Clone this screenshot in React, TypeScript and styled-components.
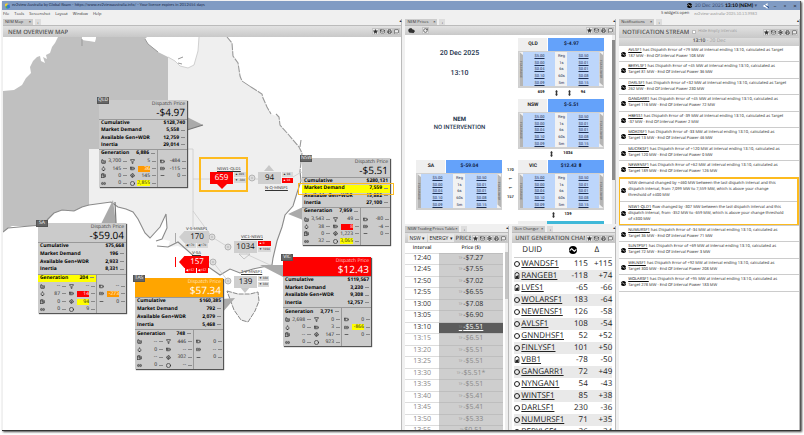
import React from "react";
import styled, { createGlobalStyle, css } from "styled-components";
import {
  Star, Mail, Printer, MessageSquare, Settings, RotateCw, Cloud, Factory, Droplet, Fuel, Link2,
  Filter, BatteryMedium, Fan, Circle, BatteryCharging, BatteryLow, Minus,
} from "lucide-react";

const ui = '"Open Sans", "Noto Sans", sans-serif';

const GlobalStyle = createGlobalStyle`
  * { box-sizing: border-box; }
  body { margin: 0; background: #fff; font-family: ${ui}; font-size: 5px; line-height: 1.2; color: #222; text-rendering: geometricPrecision; }
  button, select, input { font: inherit; color: inherit; margin: 0; padding: 0; border: 0; background: none; }
  ul { list-style: none; margin: 0; padding: 0; }
  a { color: inherit; }
  h1, h2, p { margin: 0; }
  svg { display: block; flex: none; }
`;

const Page = styled.div`
  height: 100vh;
  min-height: 400px;
  padding: 1px 3px 4px 2px;
  background: #fff;
  overflow: hidden;
`;
const Window = styled.div`
  height: 100%;
  display: flex;
  flex-direction: column;
  background: #f0f0f0;
  border-bottom: 1px solid #333;
  border-right: 1px solid #555;
  box-shadow: 1px 1px 2px #444;
`;
const TitleBar = styled.header`
  height: 9px;
  flex: none;
  display: flex;
  align-items: center;
  gap: 2px;
  padding: 0 1px 0 3px;
  background: #809bc3;
  color: #1c2c4c;
  font-family: Lato, sans-serif;
  font-size: 4px;
  white-space: nowrap;
`;
const Spacer = styled.span`flex: 1;`;
const Clock = styled.span`
  display: flex;
  align-items: center;
  gap: 3px;
  margin-right: 4px;
  font-size: 5px;
  color: #3a4c70;
  b { color: #000; }
`;
const WinButton = styled.button`
  width: 8px;
  height: 8px;
  font-size: 6px;
  line-height: 7px;
  color: #111;
`;
const MenuBar = styled.nav`
  height: 9px;
  flex: none;
  display: flex;
  align-items: center;
  gap: 5px;
  padding: 0 43px 0 1px;
  font-size: 4px;
  white-space: nowrap;
  color: #333;
`;
const Faint = styled.span`
  font-family: Lato, sans-serif;
  color: #999;
`;

const Columns = styled.main`
  flex: 1;
  min-height: 0;
  display: grid;
  grid-template-columns: 400fr 211fr 181fr;
  gap: 3px;
  padding: 0 0 0 1px;
`;
const Stack = styled.div`
  display: grid;
  grid-template-rows: 205px minmax(0, 1fr);
  gap: 2px;
  min-height: 0;
  min-width: 0;
`;
const Split = styled.div`
  display: grid;
  grid-template-columns: minmax(0, 1fr) minmax(0, 1fr);
  gap: 3px;
  min-height: 0;
`;
const Panel = styled.section`
  display: flex;
  flex-direction: column;
  min-width: 0;
  min-height: 0;
  border-right: 1px solid #bbb;
`;
const TabRow = styled.div`
  height: 6px;
  flex: none;
  display: flex;
  gap: 2px;
  font-size: 4px;
  line-height: 6px;
  white-space: nowrap;
`;
const TabLabel = styled.button<{ $w: number }>`
  width: ${(p) => p.$w}px;
  display: flex;
  justify-content: space-between;
  padding: 0 2px;
  background: #ccc;
  line-height: 6px;
  color: #333;
`;
const AddTab = styled.button`
  width: 6px;
  background: #ddd;
  text-align: center;
  line-height: 5px;
`;
const Bar = styled.div<{ $h: number; $tight?: boolean }>`
  height: ${(p) => p.$h}px;
  flex: none;
  display: flex;
  align-items: center;
  gap: ${(p) => (p.$tight ? 1 : 3)}px;
  padding: 0 1px 0 ${(p) => (p.$tight ? 3 : 5)}px;
  overflow: hidden;
  background: linear-gradient(#e2e2e2, #c8c8c8);
  border-top: 1px solid #bbb;
  white-space: nowrap;
`;
const Heading = styled.h2`
  font-size: 6px;
  line-height: 10px;
  font-weight: 600;
  color: #555;
  flex: 0 1 auto;
  min-width: 0;
  overflow: hidden;
`;
const ToolSet = styled.div`
  margin-left: auto;
  display: flex;
  flex: none;
`;
const Tool = styled.button`
  width: 7px;
  height: 7px;
  display: grid;
  place-items: center;
  background: #ececec;
  border: 1px solid #c4c4c4;
  color: #333;
`;
const RefreshTool = styled(Tool)`margin-left: 6px;`;
const Body = styled.div`
  position: relative;
  flex: 1;
  min-height: 0;
  overflow: hidden;
  background: #fff;
`;

function Tools({ gear }: { gear?: boolean }) {
  return (
    <ToolSet>
      <Tool aria-label="Favourite"><Star size={5} fill="#333" /></Tool>
      <Tool aria-label="Mail"><Mail size={5} strokeWidth={3} /></Tool>
      {gear && <Tool aria-label="Settings"><Settings size={5} strokeWidth={4} /></Tool>}
      <Tool aria-label="Print"><Printer size={5} strokeWidth={3} /></Tool>
      <Tool aria-label="Comment"><MessageSquare size={5} strokeWidth={3} /></Tool>
    </ToolSet>
  );
}
function Tabs({ name, w }: { name: string; w: number }) {
  return (
    <TabRow>
      <TabLabel $w={w}><span>{name}</span><b>×</b></TabLabel>
      <AddTab aria-label="Add tab">+</AddTab>
      <Spacer />
      <span>▴</span>
    </TabRow>
  );
}

/* ---------- map ---------- */
const MapSvg = styled.svg`
  position: absolute;
  left: 0;
  top: 0;
`;
type Tone = "gray" | "red" | "orange";
const tones: Record<Tone, string> = { gray: "#cbcbcb", red: "#fe0000", orange: "#ffa500" };

const Card = styled.article<{ $x: number; $y: number; $h: number }>`
  position: absolute;
  left: ${(p) => p.$x}px;
  top: ${(p) => p.$y}px;
  width: 88px;
  height: ${(p) => p.$h}px;
  display: flex;
  flex-direction: column;
  background: #cbcbcb;
  box-shadow: 1px 1px 1px #555;
  color: #000;
  white-space: nowrap;
`;
const RegionTag = styled.span`
  position: absolute;
  left: -2px;
  top: -3px;
  width: 12px;
  height: 7px;
  background: #666;
  border: 1px solid #555;
  color: #fff;
  font-size: 5px;
  line-height: 5px;
  text-align: center;
`;
const CardHead = styled.header<{ $tone: Tone }>`
  height: 20px;
  padding: 1px 2px 0;
  text-align: right;
  background: ${(p) => tones[p.$tone]};
  color: ${(p) => (p.$tone === "gray" ? "#000" : "#fff")};
  border-bottom: 1px solid #999;
  small { display: block; font-size: 5px; line-height: 6px; opacity: 0.7; }
  strong { display: block; font-size: 10px; line-height: 11px; font-weight: 400; }
`;
const Line = styled.div<{ $hot?: boolean }>`
  flex: 1;
  min-height: 0;
  display: flex;
  align-items: center;
  justify-content: space-between;
  padding: 0 2px;
  font-size: 5px;
  line-height: 7px;
  font-weight: 700;
  background: ${(p) => (p.$hot ? "#ffff00" : "transparent")};
`;
const Dash = styled.i`
  display: inline-block;
  flex: none;
  width: 4px;
  height: 1px;
  margin-left: 2px;
  vertical-align: middle;
  background: #888;
`;
const FuelArea = styled.div`
  flex: 5;
  display: grid;
  grid-template-columns: 59px 29px;
  border-top: 1px solid #999;
`;
const FuelLeft = styled.div`
  display: flex;
  flex-direction: column;
  border-right: 1px solid #999;
`;
const FuelGrid = styled.div<{ $cols: number }>`
  flex: 4;
  display: grid;
  grid-template-columns: repeat(${(p) => p.$cols}, minmax(0, 1fr));
  grid-template-rows: repeat(4, minmax(0, 1fr));
`;
const FuelRight = styled.div`
  display: flex;
  flex-direction: column;
`;
const Blank = styled.div`flex: 1;`;
const FuelCell = styled.div`
  display: flex;
  align-items: center;
  padding: 0 1px 0 2px;
  font-size: 5px;
  line-height: 6px;
  color: #222;
`;
const FuelValue = styled.span<{ $c?: string }>`
  margin-left: auto;
  min-width: 12px;
  text-align: right;
  ${(p) => p.$c && css`background: ${p.$c};`}
  ${(p) => p.$c && p.$c !== "#ffff00" && css`color: #fff;`}
`;
const fuelIcons = [Factory, Filter, Droplet, BatteryMedium, Fuel, Fan, Link2, Circle];
const sideIcons = [BatteryLow, BatteryCharging, Minus];
type Fv = string | [string, string];

interface Region {
  code: string; x: number; y: number; h: number; tone: Tone; price: string; sums: string[];
  gen: string; hotSum?: number; hotGen?: boolean; fuels: Fv[]; side: Fv[];
}
const R = "#fe0000", O = "#ff9900", Y = "#ffff00";
const regions: Region[] = [
  { code: "QLD", x: 96, y: 63, h: 87, tone: "gray", price: "-$4.97", sums: ["$128,740", "5,558", "12,759", "29,014"], gen: "6,886",
    fuels: ["3,700", "5", "145", ["36", O], "0", "145", "0", ["2,855", Y]], side: ["-484", "-115", "0"] },
  { code: "SA", x: 35, y: 186, h: 90, tone: "gray", price: "-$59.04", sums: ["$75,668", "196", "2,933", "8,331"], gen: "204", hotGen: true,
    fuels: ["--", "--", "87", ["14", R], "0", ["94", Y], "0", "9"], side: ["--", ["-273", O], "0"] },
  { code: "NSW", x: 299, y: 121, h: 87, tone: "gray", price: "-$5.51", sums: ["$280,131", "7,559", "15,882", "27,100"], gen: "7,959", hotSum: 1,
    fuels: ["3,543", "49", "38", ["8", R], "0", "1,223", "32", ["3,065", Y]], side: ["-80", "-4", "0"] },
  { code: "TAS", x: 132, y: 241, h: 91, tone: "orange", price: "$57.34", sums: ["$160,385", "792", "2,079", "5,468"], gen: "748",
    fuels: ["--", "446", "0", "--", "--", "302", "0", "--"], side: ["0", "--", "0"] },
  { code: "VIC", x: 280, y: 220, h: 89, tone: "red", price: "$12.43", sums: ["$119,567", "3,230", "9,308", "12,757"], gen: "3,771",
    fuels: ["2,698", "0", "0", "3", "--", "147", "0", "923"], side: ["0", ["-866", Y], "0"] },
];
const sumLabels = ["Cumulative", "Market Demand", "Available Gen+WDR", "Inertia"];

function Fuels({ items, icons }: { items: Fv[]; icons: typeof fuelIcons }) {
  return (
    <>
      {items.map((f, i) => {
        const Icon = icons[i];
        const [v, c] = Array.isArray(f) ? f : [f, undefined];
        return (
          <FuelCell key={i}>
            <Icon size={5} strokeWidth={3} />
            <FuelValue $c={c}>{v}</FuelValue>
            <Dash />
          </FuelCell>
        );
      })}
    </>
  );
}
function RegionCard({ r }: { r: Region }) {
  return (
    <Card $x={r.x} $y={r.y} $h={r.h}>
      <CardHead $tone={r.tone}>
        <small>Dispatch Price</small>
        <strong>{r.price}</strong>
      </CardHead>
      <RegionTag>{r.code}</RegionTag>
      {sumLabels.map((l, i) => (
        <Line key={l} $hot={r.hotSum === i}>
          <span>{l}</span>
          <span>{r.sums[i]}{i > 0 && <Dash />}</span>
        </Line>
      ))}
      <FuelArea>
        <FuelLeft>
          <Line $hot={r.hotGen}><span>Generation</span><span>{r.gen}<Dash /></span></Line>
          <FuelGrid $cols={2}><Fuels items={r.fuels} icons={fuelIcons} /></FuelGrid>
        </FuelLeft>
        <FuelRight>
          <Blank />
          <FuelGrid $cols={1}><Fuels items={r.side} icons={sideIcons} /></FuelGrid>
        </FuelRight>
      </FuelArea>
    </Card>
  );
}

const Frame = styled.div<{ $x: number; $y: number; $w: number; $h: number }>`
  position: absolute;
  left: ${(p) => p.$x}px;
  top: ${(p) => p.$y}px;
  width: ${(p) => p.$w}px;
  height: ${(p) => p.$h}px;
  border: 2px solid #fdbb1f;
`;
const ThinFrame = styled(Frame)`border-width: 1px;`;
const Flow = styled.div<{ $x: number; $y: number }>`
  position: absolute;
  left: ${(p) => p.$x}px;
  top: ${(p) => p.$y}px;
  display: grid;
  grid-template-columns: auto auto;
  column-gap: 1px;
  width: max-content;
`;
const FlowBox = styled.span<{ $red?: boolean; $left?: boolean }>`
  width: ${(p) => (p.$left ? 30 : 23)}px;
  height: 12px;
  padding-left: ${(p) => (p.$left ? 6 : 0)}px;
  clip-path: ${(p) => (p.$left ? "polygon(0 50%, 18% 0, 100% 0, 100% 100%, 18% 100%)" : "none")};
  background: ${(p) => (p.$red ? "#fe0000" : "#cfcfcf")};
  color: ${(p) => (p.$red ? "#fff" : "#111")};
  font-size: 8px;
  line-height: 12px;
  text-align: center;
`;
const Limits = styled.span<{ $under?: boolean }>`
  display: flex;
  flex-direction: ${(p) => (p.$under ? "row" : "column")};
  gap: 1px;
  ${(p) => p.$under && css`grid-column: 1; padding: 0 0 0 6px;`}
`;
const Limit = styled.small<{ $red?: boolean }>`
  padding: 0 1px;
  min-width: 11px;
  height: 5px;
  background: ${(p) => (p.$red ? "#fe0000" : "#d8d8d8")};
  color: ${(p) => (p.$red ? "#fff" : "#222")};
  font-size: 3px;
  line-height: 5px;
  white-space: nowrap;
`;
const FlowName = styled.span<{ $x: number; $y: number }>`
  position: absolute;
  left: ${(p) => p.$x}px;
  top: ${(p) => p.$y}px;
  font-size: 4px;
  line-height: 5px;
  font-family: Lato, sans-serif;
  color: #333;
  text-decoration: underline;
`;

interface FlowData { name: string; nx: number; ny: number; x: number; y: number; v: string; red?: boolean; left?: boolean; lim: [string, boolean][]; }
const flows: FlowData[] = [
  { name: "NSW1-QLD1", nx: 214, ny: 129, x: 207, y: 135, v: "659", red: true, lim: [["▲ 493", false], ["▼ -388", false]] },
  { name: "N-Q-MNSP1", nx: 262, ny: 148, x: 255, y: 135, v: "94", lim: [["▲ 94", false], ["▲ 94", true]] },
  { name: "V-S-MNSP1", nx: 183, ny: 189, x: 176, y: 194, v: "170", left: true, lim: [["◀ 170", false], ["◀ 170", false]] },
  { name: "V-SA", nx: 189, ny: 213, x: 176, y: 219, v: "157", red: true, left: true, lim: [["◀ 157", true], ["◀ 157", true]] },
  { name: "VIC1-NSW1", nx: 238, ny: 197, x: 231, y: 204, v: "1034", lim: [["▲ 0", true], ["▼ 1034", false]] },
  { name: "T-V-MNSP1", nx: 238, ny: 232, x: 231, y: 239, v: "139", lim: [["▼ 338", false], ["▼ 339", false]] },
];

function OverviewMap() {
  return (
    <Body>
      <MapSvg width="400" height="395" viewBox="3 36 400 395" aria-hidden="true">
        <path d="M58 36 L55 42 52 46 50 52 46 54 47 58 43 56 45 62 41 60 40 55 37 56 33 60 30 66 31 72 26 77 22 84 14 89 3 90 V231 L8 227 12 225 30 225 42 224 48 219 54 212 62 209 74 210 82 206 89 204 V148 H168 V56 L158 51 148 43 145 38 147 36 H96 L95 40 82 39 V36Z" fill="#c0c0c0" />
        <path d="M82 36 H96 L95 41 83 39Z" fill="#fff" />
        <path d="M89 148 H168 V56 L175 60 180 65 188 67 194 64 198 50 199 36 H227 L232 42 233 55 238 62 240 75 242 80 251 86 262 93 267 106 271 113 279 116 280 124 288 133 299 146 302 152 300 170 301 180 297 192 293 205 285 214 282 226 277 240 273 257 272 264 253 268 240 272 230 268 220 274 210 267 198 259 187 249 178 245 168 246 170 240 162 238 167 227 165 214 160 226 150 237 145 232 138 218 133 211 126 208 118 206 111 201 89 204Z" fill="#efefef" />
        <path d="M3 231 L8 227 30 225 42 224 M47 219 L54 212 62 209 74 210 82 206 89 204 111 201 118 206 126 208 133 211 138 218 145 232 150 237 160 226 166 213 167 227 162 238 156 240 M157 245 L168 246 178 241 187 249 198 259 210 267 220 274 230 268 240 272 253 268 272 264 273 257 277 240 282 226 285 214 293 205 297 192 301 180 300 170" fill="none" stroke="#8a8a8a" strokeWidth="1.1" />
        <path d="M227 36 L232 42 233 55 238 62 240 75 242 80 M251 86 L262 93 263 97 267 106 271 113 M276 113 L279 116 280 124 288 133 299 146 302 152 300 170 M301 139 L300 146" fill="none" stroke="#999" strokeWidth="1.1" strokeDasharray="7 1" />
        <path d="M242 80 L251 86 M145 38 L148 43 158 51 M82 38 V45 M178 58 l5 -2 M178 62 l4 1" fill="none" stroke="#999" />
        <path d="M168 56 L175 60 180 65 188 67 194 64 198 50 199 36" fill="none" stroke="#d0d0d0" />
        <path d="M227 290 L238 293 250 293 258 291 259 300 255 310 248 321 241 319 234 309Z" fill="#efefef" stroke="#888" strokeDasharray="5 1" />
        <path d="M186 148 H193 V228 M193 178 H210 M193 210 L212 236 228 246 M248 178 H262 M293 176 Q300 170 309 170 M246 253 L270 264 M213 261 L228 280" fill="none" stroke="#ccc" strokeWidth="0.8" />
        <path d="M187 116 L203 124 187 129Z M101 223 L113 199 116 223Z M303 206 L288 213 303 219Z M285 264 H260 L285 277Z M222 298 L235 297 222 312Z" fill="#aaa" />
        <path d="M187 129 L203 124 M115 201 L116 222" stroke="#777" strokeWidth="1.2" />
        <path d="M216 182 H228 L222 188Z" fill="#fe0000" />
        <path d="M264 170 L269 164 274 170Z M240 286 H250 L245 292Z" fill="#c8c8c8" />
        <path d="M239 253 H250 L244 258Z" fill="#eee" stroke="#aaa" strokeWidth="0.6" />
        <path d="M175.500 232 V242" stroke="#aaa" />
        <path d="M175.500 256 V266" stroke="#fe0000" />
        <g fill="#ddd" stroke="#aaa" strokeWidth="0.8">
          {[[252, 177], [212, 236], [213, 261], [228, 246], [228, 280]].map(([x, y]) => (
            <g key={`${x}-${y}`}><circle cx={x} cy={y} r="3" /><path d={`M${x - 1} ${y}h2`} /></g>
          ))}
        </g>
      </MapSvg>
      {flows.map((f) => (
        <React.Fragment key={f.name}>
          <FlowName $x={f.nx} $y={f.ny}>{f.name}</FlowName>
          <Flow $x={f.x} $y={f.y}>
            <FlowBox $red={f.red} $left={f.left}>{f.v}</FlowBox>
            <Limits $under={f.left}>
              {f.lim.map(([t, red], i) => <Limit key={i} $red={red}>{t}</Limit>)}
            </Limits>
          </Flow>
        </React.Fragment>
      ))}
      {regions.map((r) => <RegionCard key={r.code} r={r} />)}
      <Frame $x={196} $y={120} $w={49} $h={35} />
      <ThinFrame $x={295} $y={146} $w={96} $h={12} />
    </Body>
  );
}

/* ---------- prices ---------- */
const PriceGrid = styled.div`
  display: grid;
  grid-template-columns: 86px 16px 86px;
  grid-auto-rows: 61px;
  padding: 3px 0 0 11px;
  font-family: Roboto, sans-serif;
`;
const Caption = styled.div<{ $gap: number; $top: number; $size: number }>`
  grid-column: 1;
  display: flex;
  flex-direction: column;
  align-items: center;
  gap: ${(p) => p.$gap}px;
  padding-top: ${(p) => p.$top}px;
  font-size: ${(p) => p.$size}px;
  line-height: 8px;
  font-weight: 500;
  color: #24344d;
  white-space: nowrap;
`;
const PriceCard = styled.div<{ $col: number }>`
  grid-column: ${(p) => p.$col};
  display: grid;
  grid-template-columns: 29px 1fr;
  grid-template-rows: 13px 37px 9px;
  font-weight: 700;
`;
const RegionName = styled.div`
  background: #efefef;
  font-size: 5px;
  line-height: 13px;
  text-align: center;
`;
const RegionPrice = styled.div`
  margin-left: 1px;
  background: #64a2fa;
  font-size: 5px;
  line-height: 13px;
  padding-right: 10px;
  text-align: center;
  color: #102040;
`;
const NextPrice = styled.div`
  grid-column: 3;
  height: 13px;
  border-left: 29px solid #efefef;
  background: #3fb8d8;
`;
const Fcas = styled.div`
  grid-column: 1 / -1;
  display: grid;
  grid-template-columns: 4px 32px 1fr 32px 4px;
  border: solid #d0d0d0;
  border-width: 1px 1px 2px;
  background: #f2f2f2;
`;
const Side = styled.span<{ $right?: boolean }>`
  background: #b5b5b5;
  color: #777;
  font-size: 3px;
  line-height: 4px;
  text-align: center;
  writing-mode: vertical-rl;
  clip-path: ${(p) => (p.$right ? "polygon(0 0, 100% 10%, 100% 100%, 0 90%)" : "polygon(0 0, 100% 10%, 100% 100%, 0 100%)")};
`;
const FcasCol = styled.div<{ $blue?: boolean }>`
  display: flex;
  flex-direction: column;
  justify-content: space-around;
  text-align: center;
  font-size: 4px;
  line-height: 5px;
  font-weight: 400;
  color: #1d2f52;
  background: ${(p) => (p.$blue ? "#bdd6fb" : "#f2f2f2")};
  text-decoration: ${(p) => (p.$blue ? "underline" : "none")};
  text-decoration-thickness: from-font;
`;
const FlowLine = styled.div`
  grid-column: 1 / -1;
  display: flex;
  justify-content: center;
  align-items: center;
  gap: 10px;
  font-size: 4px;
  color: #222;
`;
const SideFlows = styled.div`
  grid-column: 2;
  padding-top: 7px;
  display: flex;
  flex-direction: column;
  align-items: center;
  gap: 4px;
  font-size: 4px;
  line-height: 5px;
  font-weight: 700;
`;
const ScrollTrack = styled.div`
  position: absolute;
  right: 0;
  top: 0;
  bottom: 0;
  width: 3px;
  background: #eee;
`;
const ScrollThumb = styled.div<{ $top: number; $h: string; $pale?: boolean }>`
  margin-top: ${(p) => p.$top}px;
  height: ${(p) => p.$h};
  background: ${(p) => (p.$pale ? "#c4c4c4" : "#8c8c8c")};
`;
function UpDown() {
  return (
    <svg width="3" height="6" viewBox="0 0 6 12" aria-hidden="true">
      <path d="M3 0 L6 3 H4.500 V9 H6 L3 12 0 9 H1.500 V3 H0Z" fill="#333" />
    </svg>
  );
}
function Price({ name, price, col, children }: { name: string; price: string; col: number; children?: React.ReactNode }) {
  return (
    <PriceCard $col={col}>
      <RegionName>{name}</RegionName>
      <RegionPrice>{price}</RegionPrice>
      <Fcas>
        <Side>FCAS RAISE</Side>
        <FcasCol $blue>{raise.map((v, i) => <span key={i}>{v}</span>)}</FcasCol>
        <FcasCol>{["Reg", "1s", "6s", "60s", "5m"].map((v) => <span key={v}>{v}</span>)}</FcasCol>
        <FcasCol $blue>{lower.map((v, i) => <span key={i}>{v}</span>)}</FcasCol>
        <Side $right>FCAS LOWER</Side>
      </Fcas>
      <FlowLine>{children}</FlowLine>
    </PriceCard>
  );
}
const raise = ["$5.00", "$0.00", "$0.04", "$0.10", "$0.09"];
const lower = ["$0.50", "$0.01", "$0.01", "$0.08", "$0.15"];

/* ---------- tables ---------- */
const TradeTable = styled.table`
  width: calc(100% - 5px);
  border-collapse: collapse;
  table-layout: fixed;
  text-align: center;
  color: #333;
  font-size: 7px;
  line-height: 10px;
  th { height: 10px; padding: 0; font-size: 5px; font-weight: 600; line-height: 8px; }
  th:first-child { width: 34%; }
  td { padding: 0; height: 11px; border-top: 1px solid #ddd; }
  tbody tr:nth-child(even) td { height: 12px; }
  td + td { background: #cecece; border-color: #bebebe; }
`;
const TradeRow = styled.tr<{ $state: "past" | "now" | "next" }>`
  ${(p) => p.$state === "next" && css`color: #888;`}
  ${(p) => p.$state === "now" && css`&& td + td { background: #5c5c5c; color: #fff; text-decoration: underline; }`}
  small { font-size: 3px; line-height: 0; color: #888; margin-right: 1px; vertical-align: 1px; }
`;
const trades = [
  ["12:40", "-$7.27"], ["12:45", "-$7.55"], ["12:50", "-$7.02"], ["12:55", "-$6.55"], ["13:00", "-$7.08"], ["13:05", "-$6.90"],
  ["13:10", "-$5.51"], ["13:15", "-$6.51"], ["13:20", "-$5.51"], ["13:25", "-$5.51"], ["13:30", "-$5.51*"], ["13:35", "-$5.51"],
  ["13:40", "-$5.41"], ["13:45", "-$5.41"], ["13:50", "-$5.33"], ["13:55", "$0.51"],
];
const Picker = styled.select`
  width: 19px;
  height: 8px;
  flex: none;
  appearance: none;
  background: #e8e8e8;
  font-size: 5px;
  line-height: 8px;
  padding-left: 1px;
`;
const WidePicker = styled(Picker)`width: 26px;`;
const UnitTable = styled.table`
  width: calc(100% - 5px);
  margin-left: 2px;
  table-layout: fixed;
  border-collapse: collapse;
  font-size: 8px;
  line-height: 12px;
  color: #222;
  th { font-weight: 400; height: 14px; padding: 0; text-align: right; border-bottom: 1px solid #ccc; }
  th:first-child { width: 48%; text-align: left; padding-left: 8px; }
  td { height: 12px; padding: 0; text-align: right; }
  th:last-child { width: 25%; padding-right: 13px; }
  td:first-child { text-align: left; }
  tbody tr:nth-child(even) { background: #e9e9e9; }
`;
const Unit = styled.a`
  display: flex;
  align-items: center;
  gap: 1px;
`;
const HeadIcon = styled.span`
  display: flex;
  justify-content: flex-end;
  padding-right: 11px;
`;
const units = [
  ["WANDSF1", "115", "+115"], ["RANGEB1", "-118", "+74"], ["LVES1", "-65", "-66"], ["WOLARSF1", "183", "-64"], ["NEWENSF1", "126", "-58"],
  ["AVLSF1", "108", "-54"], ["GNNDHSF1", "52", "+52"], ["FINLYSF1", "101", "+50"], ["VBB1", "-78", "-50"], ["GANGARR1", "72", "+49"],
  ["NYNGAN1", "54", "-43"], ["WINTSF1", "85", "+38"], ["DARLSF1", "230", "-36"], ["NUMURSF1", "71", "+35"], ["BERYLSF1", "36", "-34"],
];
function BatteryIcon() {
  return (
    <svg width="6" height="7" viewBox="0 0 12 14" aria-hidden="true">
      <path d="M4 3 V1 H8 V3 H10 V13 H2 V3Z" fill="none" stroke="#222" strokeWidth="1.5" />
      <path d="M3 13 V9 L9 6 V13Z" fill="#222" />
    </svg>
  );
}

/* ---------- notifications ---------- */
const DateBar = styled.div`
  height: 8px;
  font-size: 5px;
  line-height: 7px;
  text-align: center;
  background: linear-gradient(#ddd, #ccc);
  color: #999;
  b { color: #444; font-weight: 600; }
`;
const Note = styled.li<{ $tall?: boolean }>`
  position: relative;
  display: flex;
  align-items: center;
  gap: 2px;
  padding: 2px 1px 1px 2px;
  min-height: ${(p) => (p.$tall ? 24 : 16)}px;
  border-bottom: 1px solid #ccc;
  font-family: "Noto Sans", sans-serif;
  font-size: 4px;
  line-height: 6px;
  color: #333;
  &:nth-child(2n) { padding-bottom: 2px; }
  p { white-space: pre; }
  a { color: #111; }
`;
const Highlight = styled.span`
  position: absolute;
  left: -1px;
  right: 0;
  top: -1px;
  height: calc(200% + 3px);
  border: 2px solid #fdbb1f;
`;
const HideLabel = styled.label`
  display: flex;
  align-items: center;
  gap: 2px;
  font-size: 4px;
  margin-left: 2px;
  color: #999;
  input { appearance: none; width: 4px; height: 4px; background: #fff; border: 1px solid #bbb; }
`;
const err = (id: string, e: string, first: boolean, t: string, p: string): [string, string] =>
  [id, ` has Dispatch Error of ${e} MW at interval ending 13:10, calculated as${first ? " Target\n" : "\nTarget "}${t} MW - End Of Interval Power ${p} MW`];
const notes: [string, string][] = [
  err("AVLSF1", "+79", true, "187", "108"),
  err("BERYLSF1", "+45", false, "81", "36"),
  err("DARLSF1", "+32", true, "262", "230"),
  err("GANGARR1", "+45", false, "116", "72"),
  err("HBESS1", "-39", true, "-37", "2"),
  err("MOKDSF1", "-33", false, "13", "46"),
  err("MUCRKSF1", "+120", false, "120", "0"),
  err("NEWENSF1", "+62", false, "189", "126"),
  ["", "NSW demand changed by +460 MW between the last dispatch interval and this\ndispatch interval, from 7,099 MW to 7,559 MW, which is above your change\nthreshold of ±400 MW"],
  ["NSW1-QLD1", " flow changed by -307 MW between the last dispatch interval and this\ndispatch interval, from -352 MW to -659 MW, which is above your change threshold\nof ±300 MW"],
  err("NUMURSF1", "-34", false, "36", "71"),
  err("SUNTPSF1", "+69", false, "72", "3"),
  err("WELNSF1", "+92", false, "300", "208"),
  err("WOLARSF1", "+95", false, "278", "183"),
];
function Dot({ size = 5 }: { size?: number }) {
  return (
    <svg width={size} height={size} viewBox="0 0 12 12" aria-hidden="true">
      <circle cx="6" cy="6" r="6" fill="#000" />
      <path d="M1 7 L4 4 6 6 M6 6 L8 8 11 5" fill="none" stroke="#fff" strokeWidth="1.6" />
    </svg>
  );
}

export default function App() {
  return (
    <Page>
      <GlobalStyle />
      <Window>
        <TitleBar>
          <svg width="5" height="6" viewBox="0 0 10 12" aria-hidden="true">
            <path d="M0 2 L5 0 5 6 0 7Z" fill="#f0d030" /><path d="M3 5 L9 3 10 9 5 12Z" fill="#2f7ad8" /><path d="M1 7 L4 6 5 10 2 11Z" fill="#4caf50" />
          </svg>
          <span>ez2view Australia by Global Roam - https://www.ez2viewaustralia.info/ - Your licence expires in 2012454 days</span>
          <Spacer />
          <Clock><Dot /><span>20 Dec 2025 <b>13:10 (NEM)</b> ▾</span></Clock>
          <svg width="6" height="6" viewBox="0 0 12 12" aria-hidden="true"><path d="M1 4 H4 L9 0 V12 L4 8 H1Z" fill="#fff" /><path d="M5 5 L12 9" stroke="#14408a" strokeWidth="2" /></svg>
          <WinButton aria-label="Minimise">–</WinButton>
          <WinButton aria-label="Restore">▫</WinButton>
          <WinButton aria-label="Close">×</WinButton>
        </TitleBar>
        <MenuBar>
          {["File", "Tools", "Screenshot", "Layout", "Window", "Help"].map((m) => <button key={m}>{m}</button>)}
          <Spacer />
          <span>5 widgets open</span>
          <Faint>ez2view-australia-2025.10.13.9983</Faint>
        </MenuBar>
        <Columns>
          <Panel>
            <Tabs name="NEM Map" w={30} />
            <Bar $h={12}><Heading as="h1">NEM OVERVIEW MAP</Heading><Tools /></Bar>
            <OverviewMap />
          </Panel>

          <Stack>
            <Panel>
              <Tabs name="NEM Prices" w={32} />
              <Bar $h={10} $tight>
                <Cloud size={7} fill="#333" />
                <RefreshTool aria-label="Refresh"><RotateCw size={5} strokeWidth={3} /></RefreshTool>
                <Tools />
              </Bar>
              <Body>
                <PriceGrid>
                  <Caption $gap={12} $top={11} $size={7}><span>20 Dec 2025</span><span>13:10</span></Caption>
                  <Price col={3} name="QLD" price="$-4.97"><b>659</b><UpDown /><UpDown /><b>94</b></Price>
                  <Caption $gap={0} $top={17} $size={6}><b>NEM</b><span>NO INTERVENTION</span></Caption>
                  <Price col={3} name="NSW" price="$-5.51"><UpDown /><b>1034</b></Price>
                  <Price col={1} name="SA" price="$-59.04" />
                  <SideFlows><span>170</span><span>⇽</span><span>⇽</span><span>157</span></SideFlows>
                  <Price col={3} name="VIC" price="$12.43 ⬍"><UpDown /><b>139</b></Price>
                  <NextPrice />
                </PriceGrid>
                <ScrollTrack><ScrollThumb $top={5} $h="74%" /></ScrollTrack>
              </Body>
            </Panel>
            <Split>
              <Panel>
                <Tabs name="NSW Trading Prices Table" w={54} />
                <Bar $h={11} $tight>
                  <Picker aria-label="Region"><option>NSW ▾</option></Picker>
                  <WidePicker aria-label="Market"><option>ENERGY ▾</option></WidePicker>
                  <Heading>PRICES</Heading>
                  <Tools gear />
                </Bar>
                <Body>
                  <TradeTable>
                    <thead><tr><th>Interval</th><th>Price ($)</th></tr></thead>
                    <tbody>
                      {trades.map(([t, v], i) => (
                        <TradeRow key={t} $state={i < 6 ? "past" : i === 6 ? "now" : "next"}>
                          <td>{t}</td><td><small>TP</small>{v}</td>
                        </TradeRow>
                      ))}
                    </tbody>
                  </TradeTable>
                  <ScrollTrack><ScrollThumb $pale $top={9} $h="25%" /></ScrollTrack>
                </Body>
              </Panel>
              <Panel>
                <Tabs name="Gen Changer" w={33} />
                <Bar $h={11} $tight><Heading>UNIT GENERATION CHANGES</Heading><Tools /></Bar>
                <Body>
                  <UnitTable>
                    <thead><tr><th>DUID</th><th><HeadIcon><Dot size={8} /></HeadIcon></th><th>Δ</th></tr></thead>
                    <tbody>
                      {units.map(([n, v, d]) => (
                        <tr key={n}>
                          <td><Unit href="#">{["RANGEB1", "LVES1", "VBB1"].includes(n) ? <BatteryIcon /> : <Circle size={6} strokeWidth={4} />}{n}</Unit></td>
                          <td>{v}</td><td>{d}</td>
                        </tr>
                      ))}
                    </tbody>
                  </UnitTable>
                </Body>
              </Panel>
            </Split>
          </Stack>

          <Panel>
            <Tabs name="Notifications" w={35} />
            <Bar $h={13} $tight>
              <Heading>NOTIFICATION STREAM</Heading>
              <HideLabel><input type="checkbox" />Hide Empty Intervals</HideLabel>
              <Tools gear />
            </Bar>
            <Body>
              <DateBar><b>13:10</b> - 20 Dec</DateBar>
              <ul>
                {notes.map(([id, text], i) => (
                  <Note key={i} $tall={i === 8 || i === 9}>
                    <Dot />
                    <p>{id && <a href="#">{id}</a>}{text}</p>
                    {i === 8 && <Highlight />}
                  </Note>
                ))}
              </ul>
            </Body>
          </Panel>
        </Columns>
      </Window>
    </Page>
  );
}
